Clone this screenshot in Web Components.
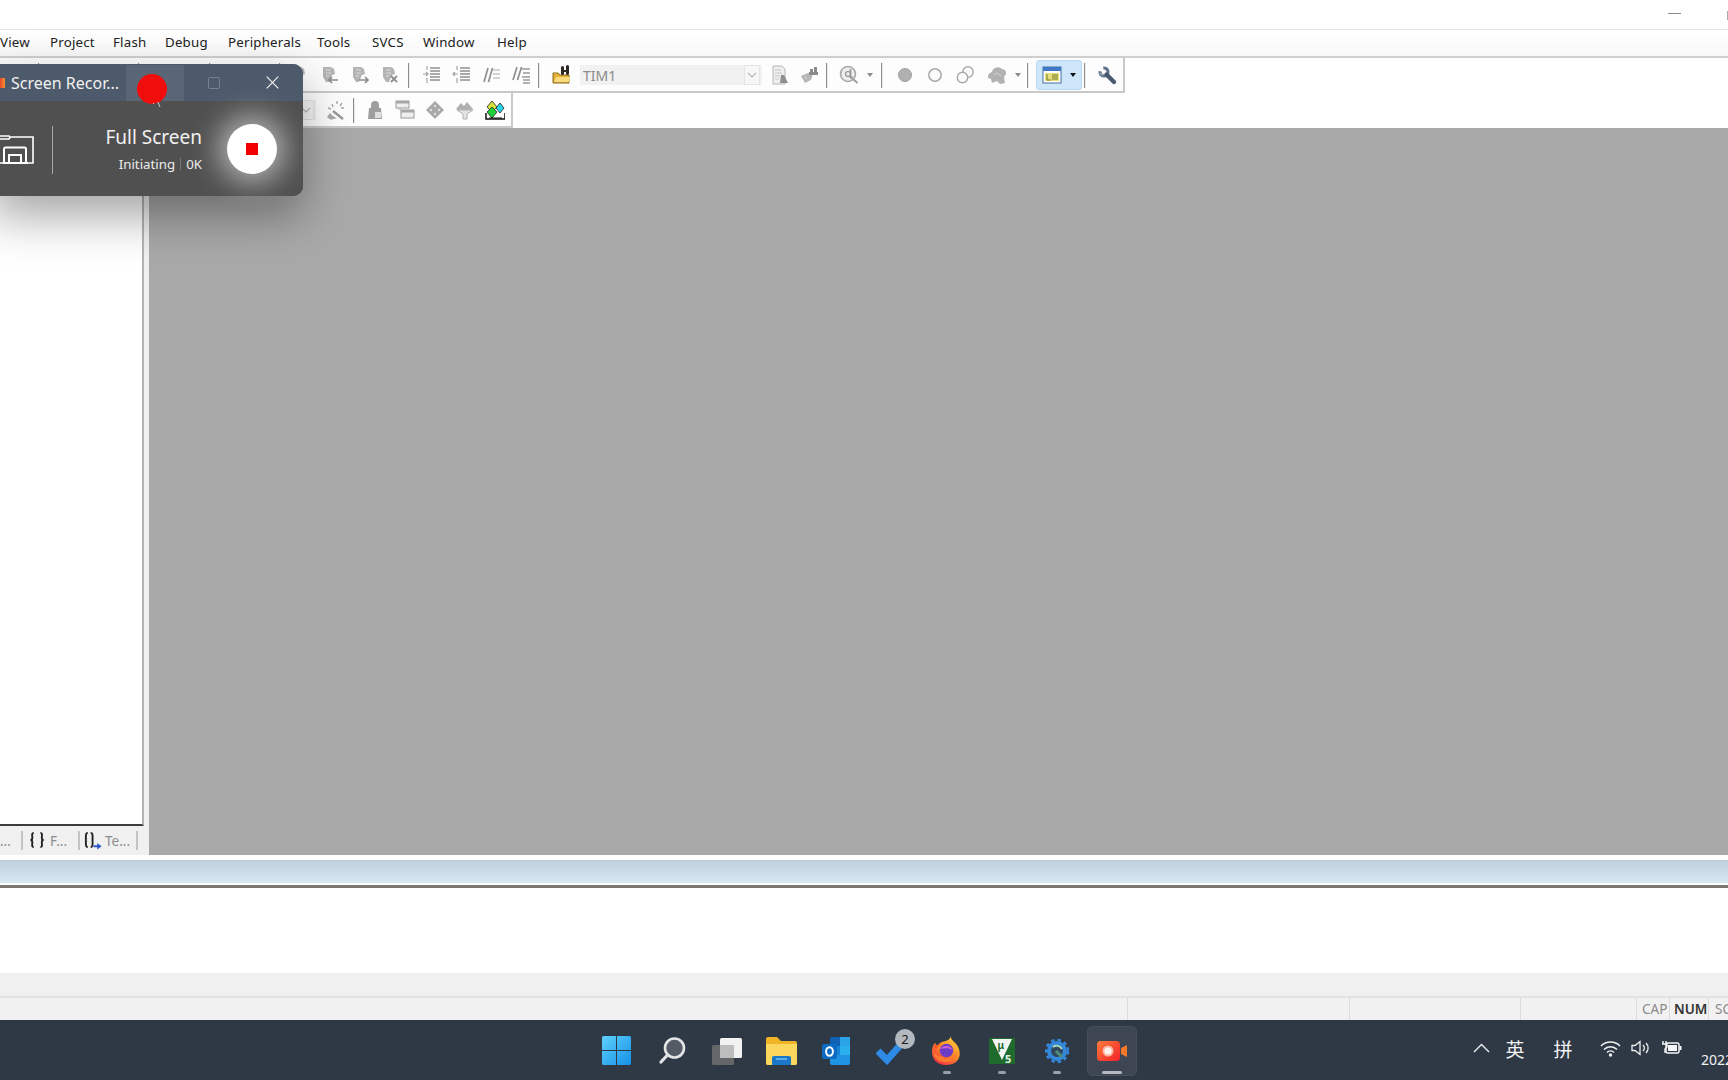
<!DOCTYPE html>
<html lang="en">
<head>
<meta charset="utf-8">
<title>Keil uVision</title>
<style>
html, body { margin: 0; height: 100%; overflow: hidden; background: #fff; }
body { display: flex; flex-direction: column; width: 1728px; height: 1080px; position: relative; font-family: "Noto Sans", "Liberation Sans", sans-serif; }
</style>
</head>
<body>

<ide-titlebar></ide-titlebar>

<ide-menubar>
  <menu-item style="width:50px">View</menu-item>
  <menu-item style="width:63px">Project</menu-item>
  <menu-item style="width:52px">Flash</menu-item>
  <menu-item style="width:63px">Debug</menu-item>
  <menu-item style="width:89px">Peripherals</menu-item>
  <menu-item style="width:55px">Tools</menu-item>
  <menu-item style="width:51px">SVCS</menu-item>
  <menu-item style="width:74px">Window</menu-item>
  <menu-item>Help</menu-item>
</ide-menubar>

<ide-toolbars>
  <ide-toolbar style="width:1125px">
    <tb-sep style="margin-left:38px"></tb-sep>
    <tb-sep style="margin-left:98px"></tb-sep>
    <tb-sep style="margin-left:69px"></tb-sep>
    <tb-sep style="margin-left:68px"></tb-sep>
    <tb-btn icon="bmk" style="margin-left:4px"></tb-btn>
    <tb-btn icon="bmkprev"></tb-btn>
    <tb-btn icon="bmknext"></tb-btn>
    <tb-btn icon="bmkclear"></tb-btn>
    <tb-sep style="margin-left:3px"></tb-sep>
    <tb-btn icon="indent" style="margin-left:7px"></tb-btn>
    <tb-btn icon="outdent"></tb-btn>
    <tb-btn icon="comment"></tb-btn>
    <tb-btn icon="uncomment"></tb-btn>
    <tb-sep style="margin-left:1px"></tb-sep>
    <tb-btn icon="folderfind" style="margin-left:7px"></tb-btn>
    <tb-combo style="margin-left:3px">TIM1</tb-combo>
    <tb-btn icon="docfind" style="margin-left:3px"></tb-btn>
    <tb-btn icon="binoc" style="margin-left:0;width:28px"></tb-btn>
    <tb-sep style="margin-left:3px"></tb-sep>
    <tb-btn icon="zoom" style="margin-left:6px"></tb-btn>
    <tb-caret></tb-caret>
    <tb-sep style="margin-left:5px"></tb-sep>
    <tb-btn icon="dot" style="margin-left:7px"></tb-btn>
    <tb-btn icon="ring"></tb-btn>
    <tb-btn icon="rings"></tb-btn>
    <tb-btn icon="blob" style="margin-left:2px"></tb-btn>
    <tb-caret></tb-caret>
    <tb-sep style="margin-left:3px"></tb-sep>
    <tb-toggle style="margin-left:7px"><tb-btn icon="winview" style="width:30px"></tb-btn><tb-caret dark></tb-caret></tb-toggle>
    <tb-sep style="margin-left:2px"></tb-sep>
    <tb-btn icon="wrench" style="margin-left:6px"></tb-btn>
  </ide-toolbar>
  <ide-toolbar style="width:513px">
    <tb-combo style="margin-left:100px;width:216px" empty></tb-combo>
    <tb-btn icon="wand" style="margin-left:4px"></tb-btn>
    <tb-sep style="margin-left:3px"></tb-sep>
    <tb-btn icon="person" style="margin-left:5px"></tb-btn>
    <tb-btn icon="windows"></tb-btn>
    <tb-btn icon="diamond"></tb-btn>
    <tb-btn icon="funnel"></tb-btn>
    <tb-btn icon="gems"></tb-btn>
  </ide-toolbar>
</ide-toolbars>

<ide-workspace>
  <project-pane>
    <pane-tab style="width:23px">...</pane-tab>
    <pane-tab style="width:57px;padding-left:6px" icon="braces">F...</pane-tab>
    <pane-tab style="width:58px;padding-left:4px" icon="tmpl">Te...</pane-tab>
  </project-pane>
  <mdi-area></mdi-area>
</ide-workspace>

<ide-splitter></ide-splitter>
<output-pane></output-pane>

<ide-statusbar>
  <status-cell style="width:1128px"></status-cell>
  <status-cell style="width:222px"></status-cell>
  <status-cell style="width:171px"></status-cell>
  <status-cell style="width:116px"></status-cell>
  <status-cell style="width:33px;padding-left:5px">CAP</status-cell>
  <status-cell style="width:39px;padding-left:4px" on>NUM</status-cell>
  <status-cell>SCRL</status-cell>
</ide-statusbar>

<win-taskbar>
  <task-app>
    <svg width="29" height="29" viewBox="0 0 29 29"><defs><linearGradient id="st" x1="0" y1="0" x2="1" y2="1"><stop offset="0" stop-color="#5fd0fb"/><stop offset="1" stop-color="#1590e6"/></linearGradient></defs><path d="M0 1.500a1.500 1.500 0 0 1 1.500-1.500H14v14H0zM15 0h12.500A1.500 1.500 0 0 1 29 1.500V14H15zM0 15h14v14H1.500A1.500 1.500 0 0 1 0 27.500zM15 15h14v12.500a1.500 1.500 0 0 1-1.500 1.500H15z" fill="url(#st)"/></svg>
  </task-app>
  <task-app>
    <svg width="28" height="28" viewBox="0 0 28 28"><circle cx="16.500" cy="11" r="9.500" fill="#545b66" stroke="#e4e4e6" stroke-width="2.600"/><path d="M9.500 18 3 25" stroke="#e4e4e6" stroke-width="3.200" stroke-linecap="round"/></svg>
  </task-app>
  <task-app>
    <svg width="30" height="28" viewBox="0 0 30 28"><rect x="8" y="1" width="22" height="20" rx="1.500" fill="#f2f2f2"/><rect x="0" y="8" width="22" height="20" rx="1.500" fill="#6a6a6a" opacity=".92"/><rect x="8" y="8" width="14" height="13" fill="#bdbdbd"/></svg>
  </task-app>
  <task-app>
    <svg width="31" height="28" viewBox="0 0 31 28"><path d="M0 2a2 2 0 0 1 2-2h9l4 4h14a2 2 0 0 1 2 2v20a2 2 0 0 1-2 2H2a2 2 0 0 1-2-2z" fill="#f0b429"/><path d="M0 7h31v19a2 2 0 0 1-2 2H2a2 2 0 0 1-2-2z" fill="#fcd75d"/><path d="M6 21a2 2 0 0 1 2-2h15a2 2 0 0 1 2 2v7H6z" fill="#1b78c9"/><rect x="10" y="21" width="11" height="2" fill="#5aaee8"/></svg>
  </task-app>
  <task-app>
    <svg width="30" height="28" viewBox="0 0 30 28"><rect x="8" y="0" width="20" height="28" rx="2" fill="#0f62b4"/><rect x="18" y="0" width="10" height="9" fill="#2ba3e8"/><rect x="8" y="9" width="10" height="9" fill="#1682d8"/><rect x="18" y="9" width="10" height="9" fill="#2ab0ee"/><path d="M8 18h20v8a2 2 0 0 1-2 2H10a2 2 0 0 1-2-2z" fill="#2094e4"/><rect x="0" y="7" width="15" height="15" rx="2" fill="#0d6bc4"/><ellipse cx="7.500" cy="14.500" rx="3.400" ry="4.300" fill="none" stroke="#fff" stroke-width="2"/></svg>
  </task-app>
  <task-app>
    <svg width="32" height="28" viewBox="0 0 32 28"><path d="M2 14 11 23 28 4" fill="none" stroke="#2d8ae6" stroke-width="7"/></svg>
    <task-badge slot="badge">2</task-badge>
  </task-app>
  <task-app state="open">
    <svg width="29" height="29" viewBox="0 0 29 29"><defs><linearGradient id="ff" x1=".8" y1="0" x2=".2" y2="1"><stop offset="0" stop-color="#ffcf3a"/><stop offset=".5" stop-color="#ff8a26"/><stop offset="1" stop-color="#ee2a4a"/></linearGradient></defs><path d="M19 0c-.5 4 3 5 6 9 5 7 4 20-11 20C5 29 0 23 0 16c0-4 1-7 3-9l2 3c1-2 3-3 5-4 4-1 8-2 9-6z" fill="url(#ff)"/><path d="M3 7c1 2 1 3 2 3 1-2 3-3 5-4-1 2-6 6-7 10-.5 1-2-5 0-9z" fill="#ff5a2c"/><circle cx="14.500" cy="14.500" r="6.800" fill="#6c3cc4"/><path d="M8 13c3-4 10-4 13 1-4-2-8-2-13-1z" fill="#d05fd8"/><path d="M1 17c2 7 8 10 15 9 5-1 9-6 9-11-2 6-7 8-12 7-5-1-8-3-12-5z" fill="#ff7a2e"/></svg>
  </task-app>
  <task-app state="open">
    <svg width="26" height="26" viewBox="0 0 26 26"><rect width="26" height="26" rx="1" fill="#1f6b2d"/><path d="M3 1h20l-10 21z" fill="#f2f5f2"/><text x="8.500" y="11" font-family="Noto Sans, sans-serif" font-size="10" font-weight="700" fill="#1f6b2d">μ</text><text x="16" y="24.500" font-family="Noto Sans, sans-serif" font-size="11" font-weight="700" fill="#e8f2e8">5</text></svg>
  </task-app>
  <task-app state="open">
    <svg width="24" height="27" viewBox="0 0 24 27"><circle cx="12" cy="14" r="8" fill="#33485e" stroke="#3388dc" stroke-width="4"/><circle cx="12" cy="14" r="11" fill="none" stroke="#3388dc" stroke-width="2.500" stroke-dasharray="3.500 3"/><path d="M8 10a6 6 0 0 1 9 2" fill="none" stroke="#a5d8b5" stroke-width="2"/><path d="M11 14l6 6" stroke="#4f8f78" stroke-width="3"/></svg>
  </task-app>
  <task-app state="active">
    <svg width="30" height="20" viewBox="0 0 30 20"><defs><linearGradient id="rc" x1="0" y1="0" x2="1" y2="1"><stop offset="0" stop-color="#ff7d3c"/><stop offset="1" stop-color="#f01f28"/></linearGradient></defs><rect width="23" height="20" rx="3.500" fill="url(#rc)"/><path d="M24 7l6-3v12l-6-3z" fill="#f47a2a"/><circle cx="11" cy="10" r="5.500" fill="#ffb7a0"/><circle cx="11" cy="10" r="3.600" fill="#fff2ec"/></svg>
  </task-app>
  <sys-tray slot="tray"></sys-tray>
</win-taskbar>

<screen-recorder></screen-recorder>

<script>
// small helper, every element is just a template in an open shadow root
function define(name, html, extra) {
  const template = document.createElement("template");
  template.innerHTML = html;
  class Comp extends HTMLElement {
    connectedCallback() {
      if (this.shadowRoot) return;
      this.attachShadow({ mode: "open" });
      this.shadowRoot.appendChild(template.content.cloneNode(true));
      if (extra) extra(this, this.shadowRoot);
    }
  }
  customElements.define(name, Comp);
}

const D = '#8c8c8c';
const sheet = (a) => `<path d="M3 2h8l3 2 1 5-3 1-1 2-2 5H6L3 12z" fill="#b4b4b4"/><path d="M6 5h5M6 8h5M6 11h3" stroke="#dcdcdc"/>${a}`;
const lines = (a) => `${a}<path d="M8 3h10M8 6h10M8 9h10M8 12h10M8 15h10" stroke="#8f8f8f" stroke-width="1.300"/>`;
const ICONS = {
  bmk: sheet(''),
  bmkprev: sheet(`<path d="M18 15H9m3-3-3 3 3 3" fill="none" stroke="${D}" stroke-width="1.700"/>`),
  bmknext: sheet(`<path d="M9 15h9m-3-3 3 3-3 3" fill="none" stroke="${D}" stroke-width="1.700"/>`),
  bmkclear: sheet(`<path d="m11 11 6 6m0-6-6 6" stroke="${D}" stroke-width="1.800"/>`),
  indent: lines(`<path d="M1 9h5m-2-2 2 2-2 2M5 1v4M5 13v5" fill="none" stroke="#a5a5a5" stroke-width="1.200"/>`),
  outdent: lines(`<path d="M6 9H1m2-2L1 9l2 2M5 1v4M5 13v5" fill="none" stroke="#a5a5a5" stroke-width="1.200"/>`),
  comment: `<path d="M2 17 6 3M6.500 17l4-14" stroke="#8f8f8f" stroke-width="1.700"/><path d="M11 5h7M11 9h7M11 13h7" stroke="#a9a9a9" stroke-width="1.200"/>`,
  uncomment: `<path d="M1 15 5 2M5.500 15l4-13" stroke="#8f8f8f" stroke-width="1.700"/><path d="M10 4h8M11 8h7M10 12h8M11 15h7M11 18h7" stroke="#999" stroke-width="1.300"/>`,
  folderfind: `<path d="M1 8h5l2 2h9v8H1z" fill="#e2b23a" stroke="#8a6b1e"/><path d="M2 17l2-5h14l-1 5z" fill="#f8da7c"/><path d="M10.500 2.500v6M15.500 1.500v7" stroke="#2c2823" stroke-width="3" stroke-linecap="round"/><path d="M10 6h6" stroke="#2c2823" stroke-width="2"/>`,
  docfind: `<path d="M3 1h9l3 3v15H3z" fill="#efefef" stroke="#b4b4b4"/><path d="M5 5h6M5 8h7M5 11h5M5 14h4" stroke="#c5c5c5"/><path d="M11 10h3l4 8h-8z" fill="#8e8e8e"/>`,
  binoc: `<path d="M9 8 2 11l4 7 6-3 2-6z" fill="#b6b6b6"/><path d="M11 4h3v4h-3zM15 2h3v7h-3zM10 7h9v3h-9z" fill="#8a8a8a"/><path d="M6 11l2 3" stroke="#d8d8d8"/>`,
  zoom: `<circle cx="9" cy="9" r="7.500" fill="#ededed" stroke="#a8a8a8" stroke-width="1.600"/><circle cx="9" cy="9" r="2.500" fill="none" stroke="#8f8f8f" stroke-width="1.200"/><path d="M11.500 4v8c0 2 2 1.500 2-.5M14 14l4.500 4" fill="none" stroke="#9a9a9a" stroke-width="1.700"/>`,
  dot: `<circle cx="10" cy="10" r="6.500" fill="#b0b0b0" stroke="#a0a0a0"/>`,
  ring: `<circle cx="10" cy="10" r="6.200" fill="#fafafa" stroke="#a8a8a8" stroke-width="1.500"/>`,
  rings: `<circle cx="13" cy="7" r="5.200" fill="#fafafa" stroke="#a8a8a8" stroke-width="1.400"/><circle cx="7.500" cy="12.500" r="5.200" fill="#fafafa" stroke="#a8a8a8" stroke-width="1.400"/>`,
  blob: `<path d="M1 13a5 5 0 0 1 4-6 6 6 0 0 1 10-3 4 4 0 0 1 4 5l-2 3 1 6-5 1-3-3-5 2-1-4z" fill="#b2b2b2"/><path d="M7 10l3-2 4 3" stroke="#d5d5d5" fill="none"/>`,
  winview: `<rect x="1" y="2" width="18" height="16" fill="#fff" stroke="#4a6f9c"/><rect x="1" y="2" width="18" height="4" fill="#3f78c4"/><rect x="3" y="8" width="14" height="8" fill="#e9de7c"/><path d="M5 9v6M5 15h4M10 10h6M10 12h6M10 14h6" stroke="#6f7a2a" stroke-width="1"/>`,
  wrench: `<path d="M6.300 3.060A4 4 0 1 1 3.060 6.300" fill="none" stroke="#63768c" stroke-width="3.200"/><path d="M9.500 9.500 17 17" stroke="#47586f" stroke-width="4.200" stroke-linecap="round"/><path d="M3.500 8a4 4 0 0 0 2 2.500" fill="none" stroke="#c3ceda" stroke-width="1"/>`,
  wand: `<path d="M8 11 18 19" stroke="#9a9a9a" stroke-width="2.400"/><path d="M3 17l2-3 2 2 3 2-4 1zM7 4l1 3M12 1v3M17 3l-2 3M3 8l3 1M16 8h3" stroke="#aaa" stroke-width="1.400" fill="#aaa"/>`,
  person: `<path d="M6 5a4 4 0 0 1 8 0v3h2l1 11H3L4 8h2z" fill="#9e9e9e"/><rect x="10" y="12" width="6" height="6" fill="#dedede"/>`,
  windows: `<rect x="1" y="1" width="13" height="7" fill="#eee" stroke="#9a9a9a"/><rect x="1" y="1" width="13" height="2.500" fill="#a6a6a6"/><rect x="6" y="10" width="13" height="8" fill="#eee" stroke="#9a9a9a"/><rect x="6" y="10" width="13" height="2.500" fill="#a6a6a6"/><path d="M3 9h3v5" stroke="#b5b5b5" fill="none"/>`,
  diamond: `<path d="M10 1l9 9-9 9-9-9z" fill="#a9a9a9"/><circle cx="10" cy="6" r="1.200" fill="#e0e0e0"/><circle cx="6" cy="10" r="1.200" fill="#e0e0e0"/><circle cx="14" cy="10" r="1.200" fill="#e0e0e0"/><circle cx="10" cy="14" r="1.200" fill="#e0e0e0"/>`,
  funnel: `<path d="M1 9l5-6 3 3 3-4 6 7-8 4v5H9v-5z" fill="#b0b0b0"/><path d="M2 10h16l-6 4v5H8v-5z" fill="#e4e4e4" stroke="#b0b0b0"/>`,
  gems: `<path d="M1 13v6h19v-6" fill="#fff" stroke="#111" stroke-width="1.500"/><path d="M7 1l5 6-5 5-5-5z" fill="#d9e23a" stroke="#222" stroke-width=".8"/><path d="M15 3l4 5-4 5-4-5z" fill="#27d5ea" stroke="#222" stroke-width=".8"/><path d="M7 7l5 5-5 6-5-6z" fill="#1fd03a" stroke="#222" stroke-width=".8"/><path d="M4 18h13" stroke="#111"/>`,
  braces: `<path d="M5 2C2.500 2 3.500 5 3.500 7 3.500 9 2 9.500 1.500 9.500 2 9.500 3.500 10 3.500 12 3.500 14 2.500 17 5 17M12 2c2.500 0 1.500 3 1.500 5s1.500 2.500 2 2.500c-.5 0-2 .5-2 2.500s1 5 -1.500 5" fill="none" stroke="#222" stroke-width="2"/>`,
  tmpl: `<path d="M4 2C1.500 2 2 5 2 9.500S1.500 17 4 17M7 2c2.500 0 2 3 2 7.500S9.500 17 7 17" fill="none" stroke="#222" stroke-width="2"/><path d="M10 15h4v-2.500l4.500 3.500-4.500 3.500V17h-4z" fill="#2d55c8"/>`
};

define("ide-titlebar", `<style>
  :host { display: flex; justify-content: flex-end; box-sizing: border-box; height: 30px; flex: none; border-bottom: 1px solid #e4e4e4; background: #fff; }
  .min { width: 13px; height: 1px; background: #8a8a8a; margin: 13px 46px 0 0; }
  .max { width: 1px; height: 9px; background: #aaa; margin-top: 11px; }
</style><div class="min"></div><div class="max"></div>`);

define("ide-menubar", `<style>
  :host { display: flex; align-items: center; box-sizing: border-box; height: 28px; flex: none; background: linear-gradient(#fff, #f8f8f8); border-bottom: 2px solid #cfcfcf; color: #222; font: 13.300px "Noto Sans", sans-serif; letter-spacing: .2px; overflow: hidden; }
</style><slot></slot>`);
define("menu-item", `<style>:host { display: block; flex: none; padding-bottom: 2px; }</style><slot></slot>`);

define("ide-toolbars", `<style>:host { display: flex; flex-direction: column; flex: none; height: 70px; background: #fff; }</style><slot></slot>`);
define("ide-toolbar", `<style>
  :host { display: flex; align-items: center; box-sizing: border-box; height: 35px; background: #fdfdfd; border-right: 2px solid #c9c9c9; border-bottom: 2px solid #c9c9c9; padding-top: 1px; }
</style><slot></slot>`);
define("tb-btn", `<style>
  :host { display: flex; flex: none; width: 30px; height: 24px; align-items: center; justify-content: center; }
  svg { width: 20px; height: 20px; }
</style><svg viewBox="0 0 20 20"></svg>`, (el, root) => {
  root.querySelector("svg").innerHTML = ICONS[el.getAttribute("icon")] || "";
});
define("tb-sep", `<style>:host { display: block; flex: none; width: 2px; height: 25px; background: linear-gradient(90deg, #8d8d8d 50%, #ececec 50%); }</style>`);
define("tb-caret", `<style>
  :host { display: block; flex: none; width: 12px; }
  i { display: block; width: 0; margin: 0 auto; border: 3.500px solid transparent; border-top: 4px solid #8a8a8a; border-bottom: 0; }
  :host([dark]) i { border-top-color: #111; }
</style><i></i>`);
define("tb-toggle", `<style>
  :host { display: flex; flex: none; align-items: center; box-sizing: border-box; width: 46px; height: 30px; background: #cde6f9; border: 1px solid #b6d9f3; border-radius: 3px; }
</style><slot></slot>`);
define("tb-combo", `<style>
  :host { display: flex; flex: none; align-items: center; justify-content: space-between; box-sizing: border-box; width: 182px; height: 20px; background: #f1f1f1; color: #8b8b8b; font: 14px "Noto Sans", sans-serif; padding-left: 3px; }
  .arrow { display: flex; align-items: center; justify-content: center; box-sizing: border-box; width: 16px; height: 20px; background: #f7f7f7; border: 1px solid #e4e4e4; margin-right: 2px; }
</style><span><slot></slot></span><span class="arrow"><svg width="10" height="6" viewBox="0 0 10 6"><path d="M1 1l4 4 4-4" fill="none" stroke="#b5b5b5" stroke-width="1.200"/></svg></span>`);

define("ide-workspace", `<style>:host { display: flex; flex: none; height: 727px; background: #f0f0f0; }</style><slot></slot>`);
define("project-pane", `<style>
  :host { display: flex; flex-direction: column; flex: none; width: 149px; box-sizing: border-box; }
  .tree { flex: 1; width: 144px; box-sizing: border-box; background: #fff; border-right: 2px solid #b4b4b4; border-bottom: 2px solid #3c3c3c; }
  .tabs { display: flex; height: 29px; flex: none; align-items: center; }
</style><div class="tree"></div><div class="tabs"><slot></slot></div>`);
define("pane-tab", `<style>
  :host { display: flex; flex: none; align-items: center; box-sizing: border-box; height: 19px; gap: 2px; border-right: 2px solid #c4c4c4; color: #8c8c8c; font: 13.500px "Noto Sans", sans-serif; }
  svg { width: 19px; height: 19px; }
</style><svg viewBox="0 0 20 20"></svg><slot></slot>`, (el, root) => {
  const icon = el.getAttribute("icon"), svg = root.querySelector("svg");
  if (icon) svg.innerHTML = ICONS[icon]; else svg.remove();
});
define("mdi-area", `<style>:host { display: block; flex: 1; background: #a9a9a9; }</style>`);

define("ide-splitter", `<style>
  :host { display: block; flex: none; height: 33px; box-sizing: border-box; background: #fff; padding-top: 5px; }
  .band { height: 23px; background: linear-gradient(#bed0de, #d9e7f2); }
  .line { height: 3px; margin-top: 2px; background: #7b7773; }
</style><div class="band"></div><div class="line"></div>`);
define("output-pane", `<style>
  :host { display: flex; flex-direction: column; flex: none; height: 110px; background: #fff; }
  .fill { height: 85px; flex: none; }
  .foot { flex: 1; background: #f0f0f0; border-bottom: 2px solid #e2e2e2; }
</style><div class="fill"></div><div class="foot"></div>`);
define("ide-statusbar", `<style>
  :host { display: flex; flex: none; height: 22px; background: #f1f1f1; overflow: hidden; color: #8a8a8a; font: 13.500px "Noto Sans", sans-serif; }
</style><slot></slot>`);
define("status-cell", `<style>
  :host { display: flex; flex: none; align-items: center; box-sizing: border-box; border-right: 1px solid #dcdcdc; padding-left: 6px; white-space: nowrap; }
  :host([on]) { color: #333; font-weight: 600; }
  :host(:last-child) { border: 0; }
</style><slot></slot>`);

define("win-taskbar", `<style>
  :host { display: grid; grid-template-columns: 1fr auto 1fr; flex: none; height: 60px; background: #2f3946; }
  .apps { display: flex; grid-column: 2; }
  .tray { display: flex; grid-column: 3; min-width: 0; overflow: hidden; }
</style><div class="apps"><slot></slot></div><div class="tray"><slot name="tray"></slot></div>`);
define("task-app", `<style>
  :host { display: flex; position: relative; flex: none; align-items: center; justify-content: center; width: 55px; height: 60px; }
  .box { display: flex; align-items: center; justify-content: center; box-sizing: border-box; width: 50px; height: 50px; border-radius: 5px; margin-top: 1px; }
  :host([state="active"]) .box { background: #3d4652; border: 1px solid #444e5b; }
  .pill { position: absolute; left: 50%; bottom: 6px; width: 8px; height: 3px; margin-left: -4px; border-radius: 2px; background: #9aa0a8; display: none; }
  :host([state]) .pill { display: block; }
  :host([state="active"]) .pill { width: 20px; margin-left: -10px; background: #b4b9c0; }
</style><div class="box"><slot></slot></div><div class="pill"></div><slot name="badge"></slot>`);
define("task-badge", `<style>
  :host { position: absolute; left: 31px; top: 9px; display: flex; align-items: center; justify-content: center; width: 20px; height: 20px; border-radius: 50%; background: #b3b8bf; color: #1c1c1c; font: 13px "Noto Sans", sans-serif; }
</style><slot></slot>`);

define("sys-tray", `<style>
  :host { display: flex; align-items: center; height: 60px; padding-left: 332px; color: #f3f3f3; font: 19px "Noto Sans CJK SC", "Noto Sans", sans-serif; white-space: nowrap; }
  .w { display: flex; flex: none; align-items: center; justify-content: center; height: 60px; padding-bottom: 4px; box-sizing: border-box; }
  .date { font: 14px "Noto Sans", sans-serif; padding: 18px 0 0 0; margin-left: 15px; }
</style>
<div class="w" style="width:20px"><svg width="17" height="10" viewBox="0 0 17 10"><path d="M1 9 8.500 1.500 16 9" fill="none" stroke="#eee" stroke-width="1.400"/></svg></div>
<div class="w" style="width:48px">英</div>
<div class="w" style="width:48px">拼</div>
<div class="w" style="width:28px;margin-left:9px"><svg width="21" height="17" viewBox="0 0 21 17"><path d="M1 6a13.500 13.500 0 0 1 19 0M4 9.500a9 9 0 0 1 13 0M7 12.500a5 5 0 0 1 7 0" fill="none" stroke="#f2f2f2" stroke-width="1.500"/><circle cx="10.500" cy="15" r="1.700" fill="#f2f2f2"/></svg></div>
<div class="w" style="width:30px;margin-left:2px"><svg width="20" height="16" viewBox="0 0 20 16"><path d="M1 5.500h3L9 1.500v13l-5-4H1z" fill="none" stroke="#f2f2f2" stroke-width="1.300"/><path d="M12 5a4 4 0 0 1 0 6M15 3a7 7 0 0 1 0 10" fill="none" stroke="#f2f2f2" stroke-width="1.300"/></svg></div>
<div class="w" style="width:30px"><svg width="21" height="16" viewBox="0 0 21 16"><path d="M2 1v3M5 1v3M1 4h5v3l-2 2v4" fill="none" stroke="#f5f5f5" stroke-width="1.400"/><rect x="5" y="3" width="13" height="10" rx="2" fill="none" stroke="#f5f5f5" stroke-width="1.500"/><rect x="7" y="5" width="9" height="6" fill="#f5f5f5"/><rect x="18.500" y="6" width="2" height="4" fill="#f5f5f5"/></svg></div>
<div class="date">2022/3/10</div>`);

define("screen-recorder", `<style>
  :host { position: absolute; left: -10px; top: 64px; display: flex; flex-direction: column; width: 313px; height: 132px; border-radius: 10px; background: #505050; box-shadow: 0 20px 48px rgba(0,0,0,.36); color: #f2f2f2; font-family: "Noto Sans", sans-serif; }
  .title { display: flex; align-items: center; flex: none; height: 37px; box-sizing: border-box; background: #4c5a6b; border-radius: 10px 10px 0 0; }
  .rec { flex: none; width: 6px; height: 10px; margin-left: 9px; background: linear-gradient(90deg, #e9352a, #f5962a); border-radius: 1px; }
  .name { flex: none; width: 111px; margin-left: 6px; font-size: 16px; white-space: nowrap; }
  .hover { flex: none; width: 58px; height: 36px; margin-left: 4px; background: #596676; }
  .ctl { display: flex; flex: none; align-items: center; justify-content: center; width: 58px; }
  .dot { position: absolute; left: 147px; top: 10px; width: 30px; height: 30px; border-radius: 50%; background: #f20d0d; }
  .tail { position: absolute; left: 162px; top: 38px; }
  .body { display: flex; flex: 1; align-items: center; border-radius: 0 0 10px 10px; background: #505050; padding-left: 10px; }
  .mode { flex: none; width: 34px; height: 30px; margin-top: 1px; }
  .div { flex: none; width: 1px; height: 48px; background: #a8a8a8; margin: 3px 0 0 18px; }
  .txt { display: flex; flex: 1; flex-direction: column; align-items: flex-end; gap: 5px; padding: 0 2px 0 0; }
  .big { font-size: 19px; line-height: 26px; }
  .small { display: flex; align-items: center; gap: 5px; font-size: 13.300px; line-height: 18px; color: #ececec; }
  .small i { width: 1px; height: 12px; background: #777; }
  .stop { display: flex; flex: none; align-items: center; justify-content: center; width: 50px; height: 50px; margin: 0 26px 0 23px; border-radius: 50%; background: #fff; box-shadow: 0 0 28px 9px rgba(255,255,255,.55); }
  .stop i { width: 12px; height: 12px; background: #f20000; }
</style>
<div class="title">
  <div class="rec"></div>
  <div class="name">Screen Recor...</div>
  <div class="hover"></div>
  <div class="ctl" style="margin-left:1px"><svg width="12" height="12" viewBox="0 0 12 12"><rect x=".5" y=".5" width="11" height="11" rx="1" fill="none" stroke="#75828f"/></svg></div>
  <div class="ctl"><svg width="13" height="13" viewBox="0 0 13 13"><path d="M.7.700l11.600 11.600M12.300.700.700 12.300" stroke="#f2f2f2" stroke-width="1.200"/></svg></div>
</div>
<div class="dot"></div>
<svg class="tail" width="9" height="7" viewBox="0 0 9 7"><path d="M1 2 2 1M6 0l2 5" fill="none" stroke="#cfcfcf" stroke-width="1"/></svg>
<div class="body">
  <svg class="mode" viewBox="0 0 34 30"><path d="M0 2h9l1 1.500L9 5H0M10 3h23v26h-6M0 29h5" fill="none" stroke="#fff" stroke-width="1.600"/><path d="M4 31V15a1.500 1.500 0 0 1 1.500-1.500h19A1.500 1.500 0 0 1 26 15v16M9 31v-10h12v10M3 29h25" fill="none" stroke="#fff" stroke-width="2"/></svg>
  <div class="div"></div>
  <div class="txt">
    <div class="big">Full Screen</div>
    <div class="small"><span>Initiating</span><i></i><span>0K</span></div>
  </div>
  <div class="stop"><i></i></div>
</div>`);
</script>
</body>
</html>
